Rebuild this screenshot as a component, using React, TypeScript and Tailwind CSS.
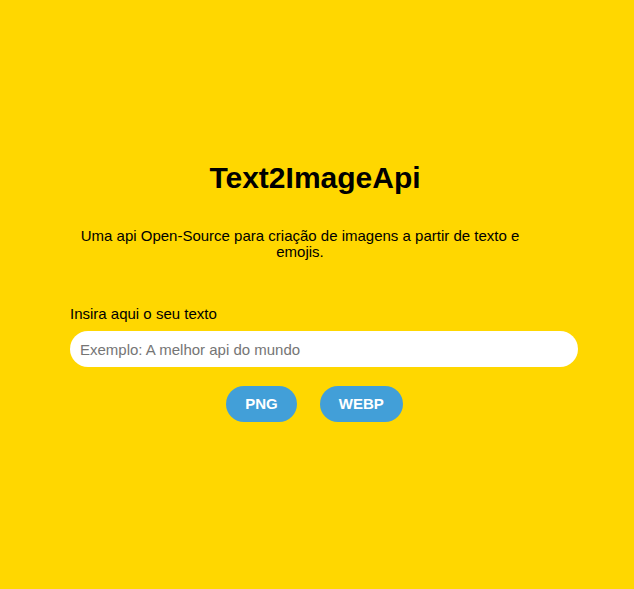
export default function App() {
  return (
    <div className="min-h-screen w-full bg-[#ffd700] pt-[161px] font-['Liberation_Sans',Arial,sans-serif] text-black">
      <h1 className="pr-1 text-center text-[30px] font-bold leading-[34px]">
        Text2ImageApi
      </h1>

      <p className="ml-[70px] mt-[33px] w-[460px] text-center text-[15px] leading-[16px]">
        Uma api Open-Source para criação de imagens a partir de texto e emojis.
      </p>

      <div className="ml-[70px] mt-[45px] w-[508px]">
        <label className="block text-[15px] leading-[17px]">
          Insira aqui o seu texto
        </label>
        <input
          type="text"
          placeholder="Exemplo: A melhor api do mundo"
          className="mt-[9px] block h-[36px] w-full rounded-full bg-white pl-[10px] text-[15px] outline-none placeholder:text-[#757575]"
        />
      </div>

      <div className="mt-[19px] flex justify-center gap-[23px] pr-[5px]">
        <button className="h-[36px] rounded-full bg-[#429fd8] px-[19px] text-[15px] font-bold text-white">
          PNG
        </button>
        <button className="h-[36px] rounded-full bg-[#429fd8] px-[19px] text-[15px] font-bold text-white">
          WEBP
        </button>
      </div>
    </div>
  );
}
